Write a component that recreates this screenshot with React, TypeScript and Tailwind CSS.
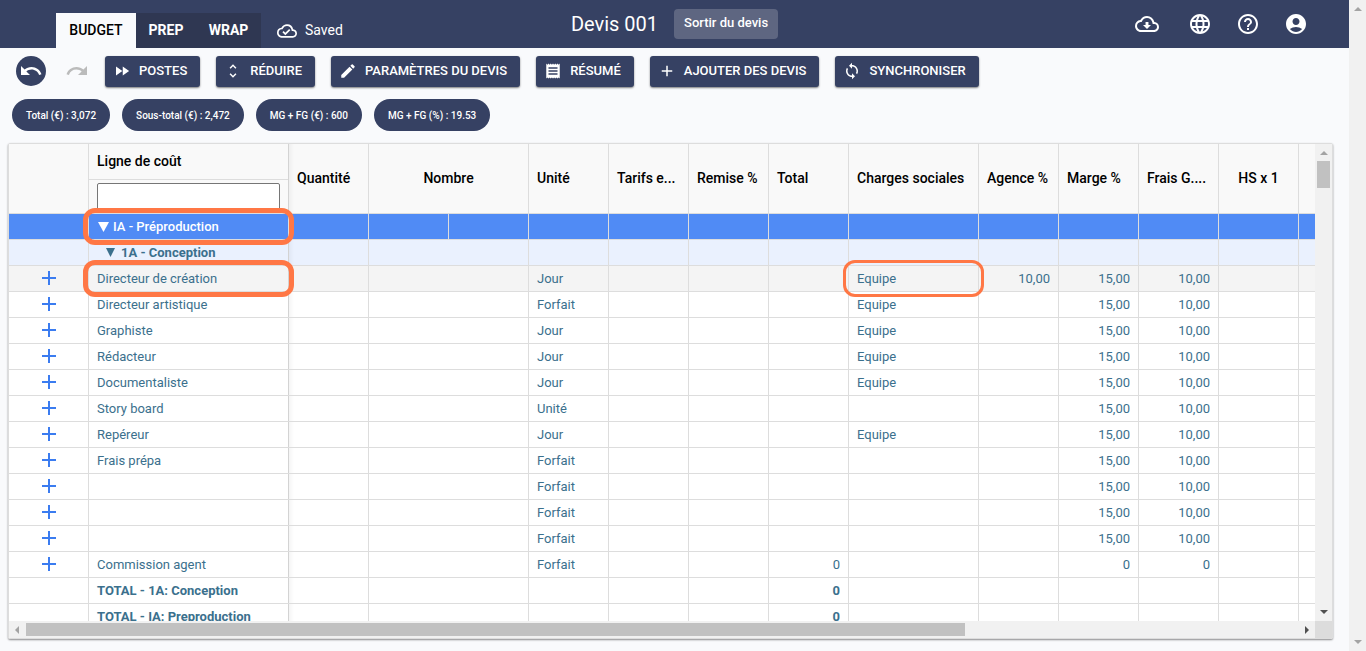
import type { ReactNode } from 'react';
import {
  MdAccountCircle,
  MdAdd,
  MdEdit,
  MdFastForward,
  MdHelpOutline,
  MdLanguage,
  MdOutlineCloudDone,
  MdOutlineCloudDownload,
  MdReceipt,
  MdRedo,
  MdSync,
  MdUndo,
  MdUnfoldMore,
} from 'react-icons/md';

const actions = [
  { label: 'POSTES', icon: <MdFastForward size={18} /> },
  { label: 'RÉDUIRE', icon: <MdUnfoldMore size={18} /> },
  { label: 'PARAMÈTRES DU DEVIS', icon: <MdEdit size={18} /> },
  { label: 'RÉSUMÉ', icon: <MdReceipt size={18} /> },
  { label: 'AJOUTER DES DEVIS', icon: <MdAdd size={18} /> },
  { label: 'SYNCHRONISER', icon: <MdSync size={18} /> },
];

const chips = ['Total (€) : 3,072', 'Sous-total (€) : 2,472', 'MG + FG (€) : 600', 'MG + FG (%) : 19.53'];

type Line = {
  name: string;
  unit: string;
  total?: string;
  charges?: string;
  agency?: string;
  margin: string;
  fees: string;
  active?: boolean;
};

const lines: Line[] = [
  { name: 'Directeur de création', unit: 'Jour', charges: 'Equipe', agency: '10,00', margin: '15,00', fees: '10,00', active: true },
  { name: 'Directeur artistique', unit: 'Forfait', charges: 'Equipe', margin: '15,00', fees: '10,00' },
  { name: 'Graphiste', unit: 'Jour', charges: 'Equipe', margin: '15,00', fees: '10,00' },
  { name: 'Rédacteur', unit: 'Jour', charges: 'Equipe', margin: '15,00', fees: '10,00' },
  { name: 'Documentaliste', unit: 'Jour', charges: 'Equipe', margin: '15,00', fees: '10,00' },
  { name: 'Story board', unit: 'Unité', margin: '15,00', fees: '10,00' },
  { name: 'Repéreur', unit: 'Jour', charges: 'Equipe', margin: '15,00', fees: '10,00' },
  { name: 'Frais prépa', unit: 'Forfait', margin: '15,00', fees: '10,00' },
  { name: '', unit: 'Forfait', margin: '15,00', fees: '10,00' },
  { name: '', unit: 'Forfait', margin: '15,00', fees: '10,00' },
  { name: '', unit: 'Forfait', margin: '15,00', fees: '10,00' },
  { name: 'Commission agent', unit: 'Forfait', total: '0', margin: '0', fees: '0' },
];

const totals = ['TOTAL - 1A: Conception', 'TOTAL - IA: Preproduction'];

const cell = 'h-[26px] border-r border-b border-[#ddd] px-2 py-0 leading-5 whitespace-nowrap';
const headBase = 'h-[70px] border-r border-b border-[#ddd] px-2 pt-0 pb-[2px] font-medium whitespace-nowrap';
const head = `${headBase} text-left`;
const headCenter = `${headBase} text-center`;
// right edge shadow of the frozen column
const frozen =
  "relative after:absolute after:inset-y-0 after:left-full after:w-[6px] after:bg-linear-to-r after:from-black/5 after:to-transparent after:content-['']";

function Marker({ thick }: { thick?: boolean }) {
  return (
    <span
      className={`pointer-events-none absolute -inset-x-[6px] -inset-y-[6px] z-20 rounded-xl border-[#ff7745] ${
        thick ? 'border-[5px]' : 'border-[3px]'
      }`}
    />
  );
}

function Empty({ count }: { count: number }) {
  return (
    <>
      {Array.from({ length: count }, (_, i) => (
        <td key={i} className={cell} />
      ))}
    </>
  );
}

function Arrow({ dir, light }: { dir: 'up' | 'down' | 'left' | 'right'; light?: boolean }) {
  const points = {
    up: '0,6 4,2 8,6',
    down: '0,2 8,2 4,6',
    left: '5,0 1,4 5,8',
    right: '3,0 7,4 3,8',
  };
  return (
    <svg width="8" height="8" viewBox="0 0 8 8" className={light ? 'fill-[#a3a3a3]' : 'fill-[#505050]'}>
      <polygon points={points[dir]} />
    </svg>
  );
}

function IconButton({ label, children, className = '' }: { label: string; children: ReactNode; className?: string }) {
  return (
    <button className={`text-white ${className}`} aria-label={label}>
      {children}
    </button>
  );
}

function TopBar() {
  return (
    <header className="grid h-12 grid-cols-[1fr_auto_1fr] bg-[#364163] text-white">
      <div className="flex items-end pl-14">
        <nav className="flex text-sm font-medium">
          <a href="#budget" className="flex h-[35px] w-20 items-center justify-center bg-[#f9fafc] pb-[2px] text-black">
            BUDGET
          </a>
          <a href="#prep" className="flex h-[35px] w-[60px] items-center justify-center bg-[#2f3752] pb-[2px] font-bold">
            PREP
          </a>
          <a href="#wrap" className="flex h-[35px] w-[65px] items-center justify-center bg-[#2f3752] pb-[2px] font-bold">
            WRAP
          </a>
        </nav>
        <div className="flex h-[35px] items-center gap-2 pb-[2px] pl-4 text-sm">
          <MdOutlineCloudDone size={20} className="mt-[2px]" />
          Saved
        </div>
      </div>
      <div className="flex items-center gap-4">
        <h1 className="text-xl">Devis 001</h1>
        <button className="h-[30px] rounded bg-[#5e6681] px-[10px] pb-[2px] text-[13px] font-medium">
          Sortir du devis
        </button>
      </div>
      <div className="flex items-center justify-end gap-6 pr-[41px]">
        <IconButton label="Télécharger" className="mr-[5px]">
          <MdOutlineCloudDownload size={24} />
        </IconButton>
        <IconButton label="Langue">
          <MdLanguage size={24} />
        </IconButton>
        <IconButton label="Aide">
          <MdHelpOutline size={24} />
        </IconButton>
        <IconButton label="Compte">
          <MdAccountCircle size={24} />
        </IconButton>
      </div>
    </header>
  );
}

function Toolbar() {
  return (
    <div className="flex items-start gap-4 px-4 pt-2">
      <button
        className="flex h-[30px] w-[30px] items-center justify-center rounded-full bg-[#364163] text-white"
        aria-label="Annuler"
      >
        <MdUndo size={24} />
      </button>
      <button className="flex h-[30px] w-[27px] items-center justify-end text-[#bbb]" aria-label="Rétablir" disabled>
        <MdRedo size={24} />
      </button>
      {actions.map((action) => (
        <button
          key={action.label}
          className="flex h-[31px] items-center gap-2 rounded-[3px] bg-[#364163] pr-[13px] pb-px pl-2 text-[13px] font-medium whitespace-nowrap text-white shadow-[0_1px_2px_rgba(0,0,0,0.5)]"
        >
          {action.icon}
          {action.label}
        </button>
      ))}
    </div>
  );
}

function BudgetTable() {
  return (
    <table className="w-[1370px] table-fixed border-separate border-spacing-0 text-[13px] text-[#3b708d]">
      <colgroup>
        <col className="w-[80px]" />
        <col className="w-[200px]" />
        <col className="w-[80px]" span={7} />
        <col className="w-[130px]" />
        <col className="w-[80px]" span={5} />
      </colgroup>
      <thead className="bg-[#f9f9f9] text-sm text-black">
        <tr>
          <th className={head} />
          <th className={`h-[70px] border-r border-b border-[#ddd] p-0 text-left align-top font-medium ${frozen}`}>
            <label htmlFor="line-filter" className="flex h-9 items-center border-b border-[#ddd] px-2 pb-[2px]">
              Ligne de coût
            </label>
            <div className="px-2 pt-[3px]">
              <input
                id="line-filter"
                type="text"
                className="block h-[28px] w-full rounded-[2px] border border-[#767676] bg-white px-1 text-[13px]"
              />
            </div>
          </th>
          <th className={head}>Quantité</th>
          <th className={headCenter} colSpan={2}>
            Nombre
          </th>
          <th className={head}>Unité</th>
          <th className={head}>Tarifs e...</th>
          <th className={head}>Remise %</th>
          <th className={head}>Total</th>
          <th className={head}>Charges sociales</th>
          <th className={head}>Agence %</th>
          <th className={head}>Marge %</th>
          <th className={head}>Frais G....</th>
          <th className={headCenter}>HS x 1</th>
          <th className={head} />
        </tr>
      </thead>
      <tbody>
        <tr className="bg-[#508bf5] font-medium text-white">
          <td className={cell} />
          <td className={`${cell} relative`}>
            <button className="flex items-center gap-1 pl-[1px]">
              <svg width="11" height="10" viewBox="0 0 11 10" className="fill-current">
                <polygon points="0,0 11,0 5.5,10" />
              </svg>
              IA - Préproduction
            </button>
            <Marker thick />
          </td>
          <Empty count={13} />
        </tr>
        <tr className="bg-[#eaf1fe] font-bold">
          <td className={cell} />
          <td className={`${cell} ${frozen}`}>
            <button className="flex items-center gap-[6px] pl-[9px]">
              <svg width="9" height="9" viewBox="0 0 9 9" className="fill-current">
                <polygon points="0,0 9,0 4.5,9" />
              </svg>
              1A - Conception
            </button>
          </td>
          <td className={cell} />
          <td className={cell} colSpan={2} />
          <Empty count={10} />
        </tr>
        {lines.map((line, i) => (
          <tr key={i} className={line.active ? 'bg-[#f4f4f4]' : 'bg-white'}>
            <td className={cell}>
              <button className="mx-auto block pb-px" aria-label="Ajouter une ligne">
                <svg width="14" height="14" viewBox="0 0 14 14" className="fill-[#3b7cf0]">
                  <path d="M6 0h2v6h6v2H8v6H6V8H0V6h6z" />
                </svg>
              </button>
            </td>
            <td className={`${cell} ${frozen}`}>
              {line.name}
              {line.active && <Marker thick />}
            </td>
            <td className={cell} />
            <td className={cell} colSpan={2} />
            <td className={cell}>{line.unit}</td>
            <td className={cell} />
            <td className={cell} />
            <td className={`${cell} text-right`}>{line.total}</td>
            <td className={`${cell} relative`}>
              {line.charges}
              {line.active && <Marker />}
            </td>
            <td className={`${cell} text-right`}>{line.agency}</td>
            <td className={`${cell} text-right`}>{line.margin}</td>
            <td className={`${cell} text-right`}>{line.fees}</td>
            <Empty count={2} />
          </tr>
        ))}
        {totals.map((label) => (
          <tr key={label} className="bg-white font-bold">
            <td className={cell} />
            <td className={`${cell} ${frozen}`}>{label}</td>
            <td className={cell} />
            <td className={cell} colSpan={2} />
            <Empty count={3} />
            <td className={`${cell} text-right`}>0</td>
            <Empty count={6} />
          </tr>
        ))}
      </tbody>
    </table>
  );
}

export default function App() {
  return (
    <div className="flex h-screen bg-[#f9fafc] font-[Roboto,sans-serif]">
      <div className="flex min-w-0 flex-1 flex-col">
        <TopBar />
        <Toolbar />
        <div className="flex gap-3 px-3 pt-3 pb-3">
          {chips.map((chip) => (
            <span
              key={chip}
              className="flex h-8 items-center rounded-full bg-[#364163] px-[14px] text-[10px] font-medium whitespace-nowrap text-white"
            >
              {chip}
            </span>
          ))}
        </div>

        <main className="mr-4 mb-3 ml-2 flex min-h-0 flex-1 flex-col rounded-[2px] border border-[#ddd] shadow-[0_1px_2px_rgba(0,0,0,0.45)]">
          <div className="flex min-h-0 flex-1">
            <div className="min-w-0 flex-1 overflow-hidden bg-white">
              <BudgetTable />
            </div>
            <div className="flex w-[17px] flex-col items-center justify-between bg-[#f1f1f1] py-[5px]">
              <Arrow dir="up" light />
              <div className="mt-1 mb-auto h-[27px] w-[13px] bg-[#c1c1c1]" />
              <Arrow dir="down" />
            </div>
          </div>
          <div className="flex h-[17px]">
            <div className="flex flex-1 items-center bg-[#f1f1f1] px-[5px]">
              <Arrow dir="left" light />
              <div className="mr-auto ml-1 h-[13px] w-[939px] bg-[#c1c1c1]" />
              <Arrow dir="right" />
            </div>
            <div className="w-[17px] bg-[#dcdcdc]" />
          </div>
        </main>
      </div>

      {/* Page scroll track */}
      <div className="flex w-[17px] flex-col items-center justify-between bg-[#f1f1f1] py-[5px]">
        <Arrow dir="up" light />
        <Arrow dir="down" light />
      </div>
    </div>
  );
}
